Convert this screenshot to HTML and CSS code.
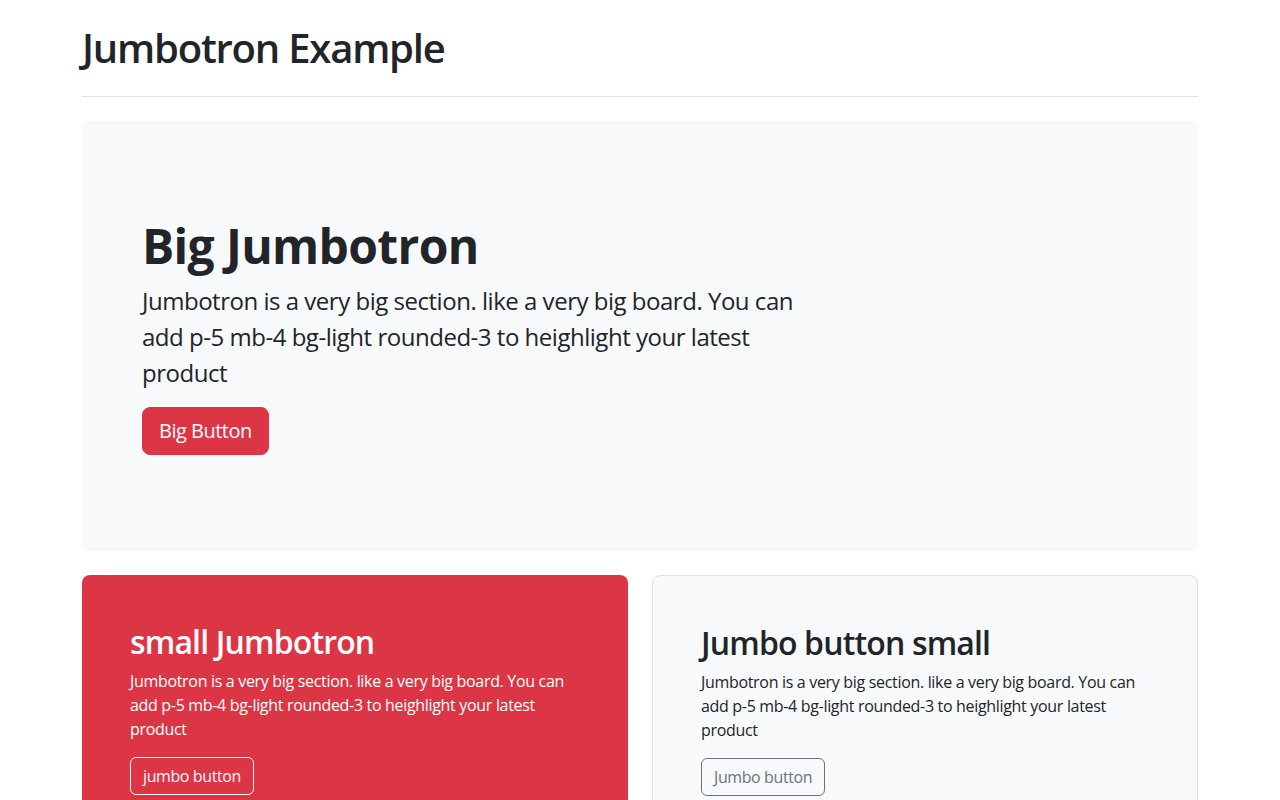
FILE: index.html
```html
<!DOCTYPE html>
<html lang="en">
<head>
<meta charset="utf-8">
<title>Jumbotron Example</title>
<link rel="stylesheet" href="styles.css">
</head>
<body>
<main class="page">
  <div class="container">
    <header class="page-header">
      <h1 class="page-title">Jumbotron Example</h1>
    </header>

    <section class="jumbotron">
      <div class="jumbotron-inner">
        <h1 class="display-title">Big Jumbotron</h1>
        <p class="lead-text">Jumbotron is a very big section. like a very big board. You can add p-5 mb-4 bg-light rounded-3 to heighlight your latest product</p>
        <button class="btn btn-lg btn-danger" type="button">Big Button</button>
      </div>
    </section>

    <div class="card-row">
      <div class="card card-danger">
        <h2 class="card-title">small Jumbotron</h2>
        <p class="card-text">Jumbotron is a very big section. like a very big board. You can add p-5 mb-4 bg-light rounded-3 to heighlight your latest product</p>
        <button class="btn btn-outline-light" type="button">jumbo button</button>
      </div>
      <div class="card card-light">
        <h2 class="card-title">Jumbo button small</h2>
        <p class="card-text">Jumbotron is a very big section. like a very big board. You can add p-5 mb-4 bg-light rounded-3 to heighlight your latest product</p>
        <button class="btn btn-outline-secondary" type="button">Jumbo button</button>
      </div>
    </div>
  </div>
</main>
</body>
</html>
```

FILE: styles.css
```css
* {
  box-sizing: border-box;
}

body {
  margin: 0;
  font-family: "Open Sans", "Noto Sans", sans-serif;
  font-size: 16px;
  line-height: 1.5;
  color: #212529;
  background: #fff;
}

h1, h2, p {
  margin: 0;
}

.page {
  padding: 24px 0;
}

.container {
  width: 1140px;
  margin: 0 auto;
  padding: 0 12px;
}

/* Header */
.page-header {
  padding-bottom: 16px;
  margin-bottom: 24px;
  border-bottom: 1px solid #dee2e6;
}

.page-title {
  font-size: 40px;
  font-weight: 600;
  line-height: 1.2;
  margin-bottom: 8px;
  letter-spacing: -1.2px;
}

/* Big jumbotron */
.jumbotron {
  background: #f8f9fa;
  border-radius: 8px;
  padding: 48px;
  margin-bottom: 24px;
}

.jumbotron-inner {
  padding: 48px 12px;
}

.display-title {
  font-size: 48px;
  font-weight: 700;
  line-height: 1.2;
  margin-bottom: 8px;
  letter-spacing: -0.65px;
}

.lead-text {
  width: 656px;
  font-size: 24px;
  line-height: 36px;
  margin-bottom: 16px;
  letter-spacing: -0.48px;
}

/* Buttons */
.btn {
  display: inline-block;
  font-family: inherit;
  font-size: 16px;
  line-height: 24px;
  padding: 6px 12px;
  border: 1px solid transparent;
  border-radius: 6px;
  background: transparent;
  cursor: pointer;
  letter-spacing: -0.4px;
}

.btn-lg {
  font-size: 20px;
  line-height: 30px;
  padding: 8px 16px;
  border-radius: 8px;
  letter-spacing: -0.5px;
}

.btn-danger {
  background: #dc3545;
  border-color: #dc3545;
  color: #fff;
}

.btn-outline-light {
  color: #f8f9fa;
  border-color: #f8f9fa;
}

.btn-outline-secondary {
  color: #6c757d;
  border-color: #6c757d;
}

/* Small jumbotrons */
.card-row {
  display: grid;
  grid-template-columns: 1fr 1fr;
  column-gap: 24px;
}

.card {
  padding: 48px;
  border-radius: 8px;
}

.card-danger {
  background: #dc3545;
  color: #fff;
}

.card-light {
  background: #f8f9fa;
  border: 1px solid #dee2e6;
}

.card-title {
  font-size: 32px;
  font-weight: 600;
  line-height: 1.2;
  margin-bottom: 8px;
  letter-spacing: -0.85px;
}

.card-text {
  margin-bottom: 16px;
  letter-spacing: -0.32px;
}
```
